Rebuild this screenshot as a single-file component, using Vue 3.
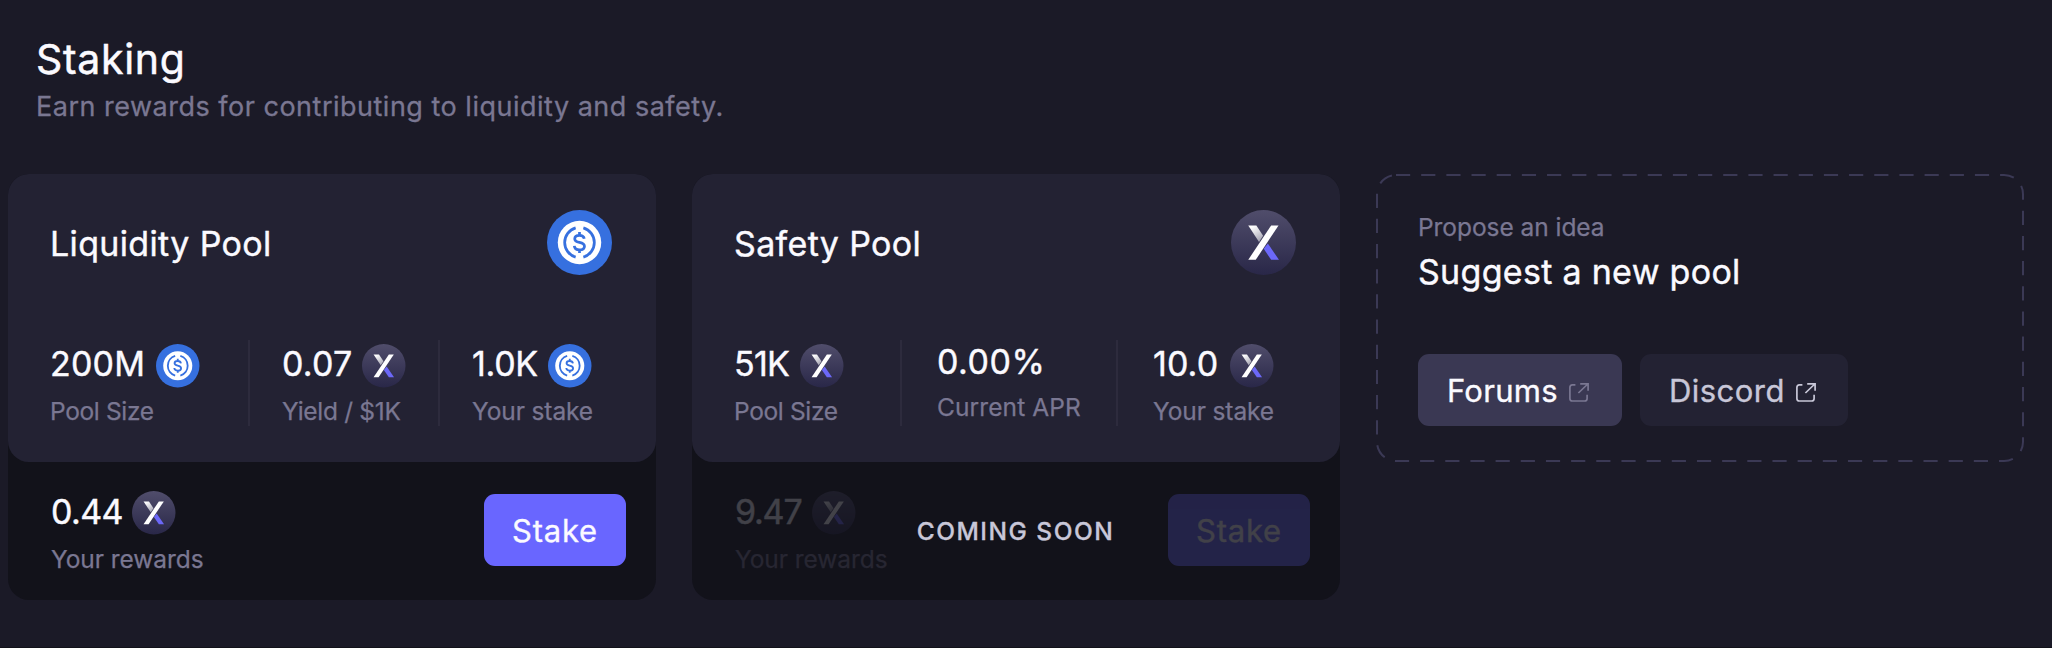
<script setup>
import { h } from 'vue'

const UsdcIcon = () =>
  h('svg', { viewBox: '0 0 64 64' }, [
    h('circle', { cx: 32, cy: 32, r: 32, fill: '#3670df' }),
    h('circle', { cx: 32, cy: 32, r: 21.4, fill: '#fff' }),
    h('g', { fill: 'none', stroke: '#3670df', 'stroke-width': 2.7, 'stroke-linecap': 'butt' }, [
      h('path', { d: 'M28.2 17.6A15 15 0 0 0 28.2 46.4' }),
      h('path', { d: 'M35.8 17.6A15 15 0 0 1 35.8 46.4' }),
      h('path', { d: 'M32 21.6V25M32 39V42.4M36.7 28.4C36.3 26.2 34.5 25 32 25C29.2 25 27.3 26.4 27.3 28.5C27.3 33.3 36.9 30.4 36.9 35.6C36.9 37.8 34.9 39.2 32 39.2C29 39.2 27.1 37.8 26.9 35.3' })
    ])
  ])

const XIcon = () =>
  h('svg', { viewBox: '0 0 64 64' }, [
    h('defs', [
      h('linearGradient', { id: 'x-disc', x1: 0, y1: 0, x2: 0, y2: 1 }, [
        h('stop', { offset: 0, 'stop-color': '#504d6b' }),
        h('stop', { offset: 1, 'stop-color': '#292748' })
      ]),
      h('linearGradient', { id: 'x-arm', gradientUnits: 'userSpaceOnUse', x1: 20, y1: 15, x2: 30, y2: 31 }, [
        h('stop', { offset: 0.1, 'stop-color': '#fff' }),
        h('stop', { offset: 1, 'stop-color': '#fff', 'stop-opacity': 0.5 })
      ])
    ]),
    h('circle', { cx: 32, cy: 32, r: 32, fill: 'url(#x-disc)' }),
    h('path', { d: 'M17 15.3H25L31.6 25.4L27.6 31.4Z', fill: 'url(#x-arm)' }),
    h('path', { d: 'M36.3 33L47.2 49H39.5L32.2 38.2Z', fill: '#6c68f8' }),
    h('path', { d: 'M39.5 15.3H46.8L24.4 49H17Z', fill: '#fff' })
  ])

const LinkIcon = () =>
  h('svg', { viewBox: '0 0 20 19', class: 'link-icon' }, [
    h('g', { fill: 'none', stroke: 'currentColor', 'stroke-width': 1.7 }, [
      h('path', { d: 'M6.4 1.9H3.4Q.9 1.9 .9 4.4V15.5Q.9 18 3.4 18H15.6Q18.1 18 18.1 15.5V11.8' }),
      h('path', { d: 'M9.4 10L18.8 1M11.2 .9H19.1V7.8' })
    ])
  ])

const icons = { usdc: UsdcIcon, x: XIcon }

const pools = [
  {
    name: 'Liquidity Pool', icon: 'usdc', layout: 'cols-a',
    stats: [
      { value: '200M', icon: 'usdc', label: 'Pool Size', vt: 0.2, lt: -0.35, w: 105 },
      { value: '0.07', icon: 'x', label: 'Yield / $1K', vt: 0.2, lt: -0.3, w: 79 },
      { value: '1.0K', icon: 'usdc', label: 'Your stake', vt: -0.3, lt: -0.1, w: 75 }
    ],
    reward: { value: '0.44', vt: -0.6, w: 80 }, soon: false
  },
  {
    name: 'Safety Pool', icon: 'x', layout: 'cols-b',
    stats: [
      { value: '51K', icon: 'x', label: 'Pool Size', vt: -0.7, lt: -0.35, w: 65 },
      { value: '0.00%', icon: null, label: 'Current APR', vt: 0.5, lt: 0.1, w: 110 },
      { value: '10.0', icon: 'x', label: 'Your stake', vt: 0.1, lt: -0.1, w: 76 }
    ],
    reward: { value: '9.47', vt: -1.2, w: 76 }, soon: true
  }
]
const track = (n) => ({ letterSpacing: n + 'px' })
const cell = (s) => ({ letterSpacing: s.vt + 'px', width: s.w + 'px' })
</script>

<template>
  <main class="page">
    <header class="header">
      <h1>Staking</h1>
      <p>Earn rewards for contributing to liquidity and safety.</p>
    </header>
    <div class="cards">
      <section v-for="p in pools" :key="p.name" class="card">
        <div class="card-top">
          <div class="card-head">
            <h2>{{ p.name }}</h2>
            <component :is="icons[p.icon]" class="coin-lg" />
          </div>
          <div class="stats" :class="p.layout">
            <div v-for="s in p.stats" :key="s.label" class="stat" :class="{ plain: !s.icon }">
              <div class="value">
                <span class="num" :style="cell(s)">{{ s.value }}</span>
                <component :is="icons[s.icon]" v-if="s.icon" class="coin" />
              </div>
              <div class="label" :style="track(s.lt)">{{ s.label }}</div>
            </div>
          </div>
        </div>
        <div class="card-foot" :class="{ soon: p.soon }">
          <div class="reward">
            <div class="value">
              <span class="num" :style="cell(p.reward)">{{ p.reward.value }}</span>
              <XIcon class="coin" />
            </div>
            <div class="label">Your rewards</div>
          </div>
          <span v-if="p.soon" class="soon-text">COMING SOON</span>
          <button class="btn stake">Stake</button>
        </div>
      </section>

      <section class="suggest">
        <svg class="outline" viewBox="0 0 648 288">
          <rect x="1" y="1" width="646" height="286" rx="19" fill="none" stroke="#3b3955" stroke-width="2" stroke-dasharray="14.2 10.97" />
        </svg>
        <div class="propose">Propose an idea</div>
        <h2>Suggest a new pool</h2>
        <div class="links">
          <button class="btn forums"><span>Forums</span><LinkIcon /></button>
          <button class="btn discord"><span>Discord</span><LinkIcon /></button>
        </div>
      </section>
    </div>
  </main>
</template>

<style>
html, body { background: #1b1a27; }
</style>

<style scoped>
.page {
  box-sizing: border-box;
  height: 648px;
  padding: 37px 0 0 8px;
  background: #1b1a27;
  border-bottom: 1px solid #12121a;
  color: #fbfaff;
  font-family: Inter, "Liberation Sans", sans-serif;
  overflow: hidden;
}
h1, h2, p { margin: 0; font-weight: 400; }
.header { height: 137px; padding-left: 28px; box-sizing: border-box; }
h1 { font-size: 41px; line-height: 44px; letter-spacing: .7px; -webkit-text-stroke: .5px; }
.header p { margin-top: 9px; font-size: 27px; line-height: 34px; letter-spacing: .5px; color: #7a7792; -webkit-text-stroke: .3px; }
.cards { display: flex; align-items: flex-start; gap: 36px; }
.card { width: 648px; height: 426px; background: #12121a; border-radius: 21px; }
.card-top { box-sizing: border-box; height: 288px; padding-top: 36px; background: #232233; border-radius: 21px; }
.card-head { display: flex; align-items: center; justify-content: space-between; height: 66px; padding: 0 44px 0 42px; }
h2 { padding-top: 2px; font-size: 34px; line-height: 44px; letter-spacing: .35px; -webkit-text-stroke: .4px; }
.coin-lg { width: 65px; height: 65px; margin-bottom: 1px; }
.stats { display: grid; height: 86px; margin-top: 64px; }
.cols-a { grid-template-columns: 242px 190px 1fr; }
.cols-b { grid-template-columns: 210px 216px 1fr; }
.stat { padding: 4px 0 0 32px; box-sizing: border-box; border-right: 2px solid #2d2b3d; }
.stat:first-child { padding-left: 42px; }
.cols-b .stat:not(:first-child) { padding-left: 35px; }
.stat:last-child { border-right: 0; }
.value { display: flex; align-items: center; height: 44px; }
.num { padding-bottom: 5px; margin-right: 1px; font-size: 34px; line-height: 39px; white-space: nowrap; -webkit-text-stroke: .4px; }
.coin { flex: none; width: 43.5px; height: 43.5px; }
.label { margin-top: 8px; font-size: 24.5px; line-height: 30px; white-space: nowrap; color: #7a7792; letter-spacing: -.05px; -webkit-text-stroke: .25px; }
.plain .value { height: 40px; }
.card-foot { display: flex; align-items: flex-start; padding: 29px 30px 0 43px; }
.card-foot .num { padding-bottom: 3px; line-height: 41px; }
.card-foot .label { margin-top: 9px; }
.btn {
  display: flex; align-items: center; justify-content: center;
  height: 72px; padding: 1px 0 0; border: 0; border-radius: 11px;
  font-family: inherit; font-size: 31px; line-height: 40px; color: #fbfaff;
  -webkit-text-stroke: .35px;
}
.stake { width: 142px; margin: 3px 0 0 auto; background: #6966ff; letter-spacing: .8px; }
.soon .reward, .soon .stake { opacity: .2; }
.soon-text { margin: 25px 0 0 29px; font-size: 24.5px; line-height: 30px; font-weight: 500; letter-spacing: 1.5px; color: #c8c7d8; -webkit-text-stroke: .3px; }
.suggest { position: relative; box-sizing: border-box; width: 648px; height: 288px; padding: 38px 42px 0; }
.outline { position: absolute; inset: 0; width: 648px; height: 288px; }
.propose { font-size: 24.5px; line-height: 30px; letter-spacing: -.05px; color: #7a7792; -webkit-text-stroke: .25px; }
.suggest h2 { margin-top: 6px; letter-spacing: .3px; }
.links { display: flex; gap: 18px; margin-top: 60px; }
.links .btn { justify-content: flex-start; padding-left: 29px; box-sizing: border-box; }
.forums { width: 204px; background: #3a3853; letter-spacing: .3px; }
.discord { width: 208px; background: #232233; color: #c8c7d8; letter-spacing: .45px; }
.link-icon { width: 20px; height: 19px; margin: 3px 0 0 11px; }
.forums .link-icon { color: #7a7792; }
</style>
